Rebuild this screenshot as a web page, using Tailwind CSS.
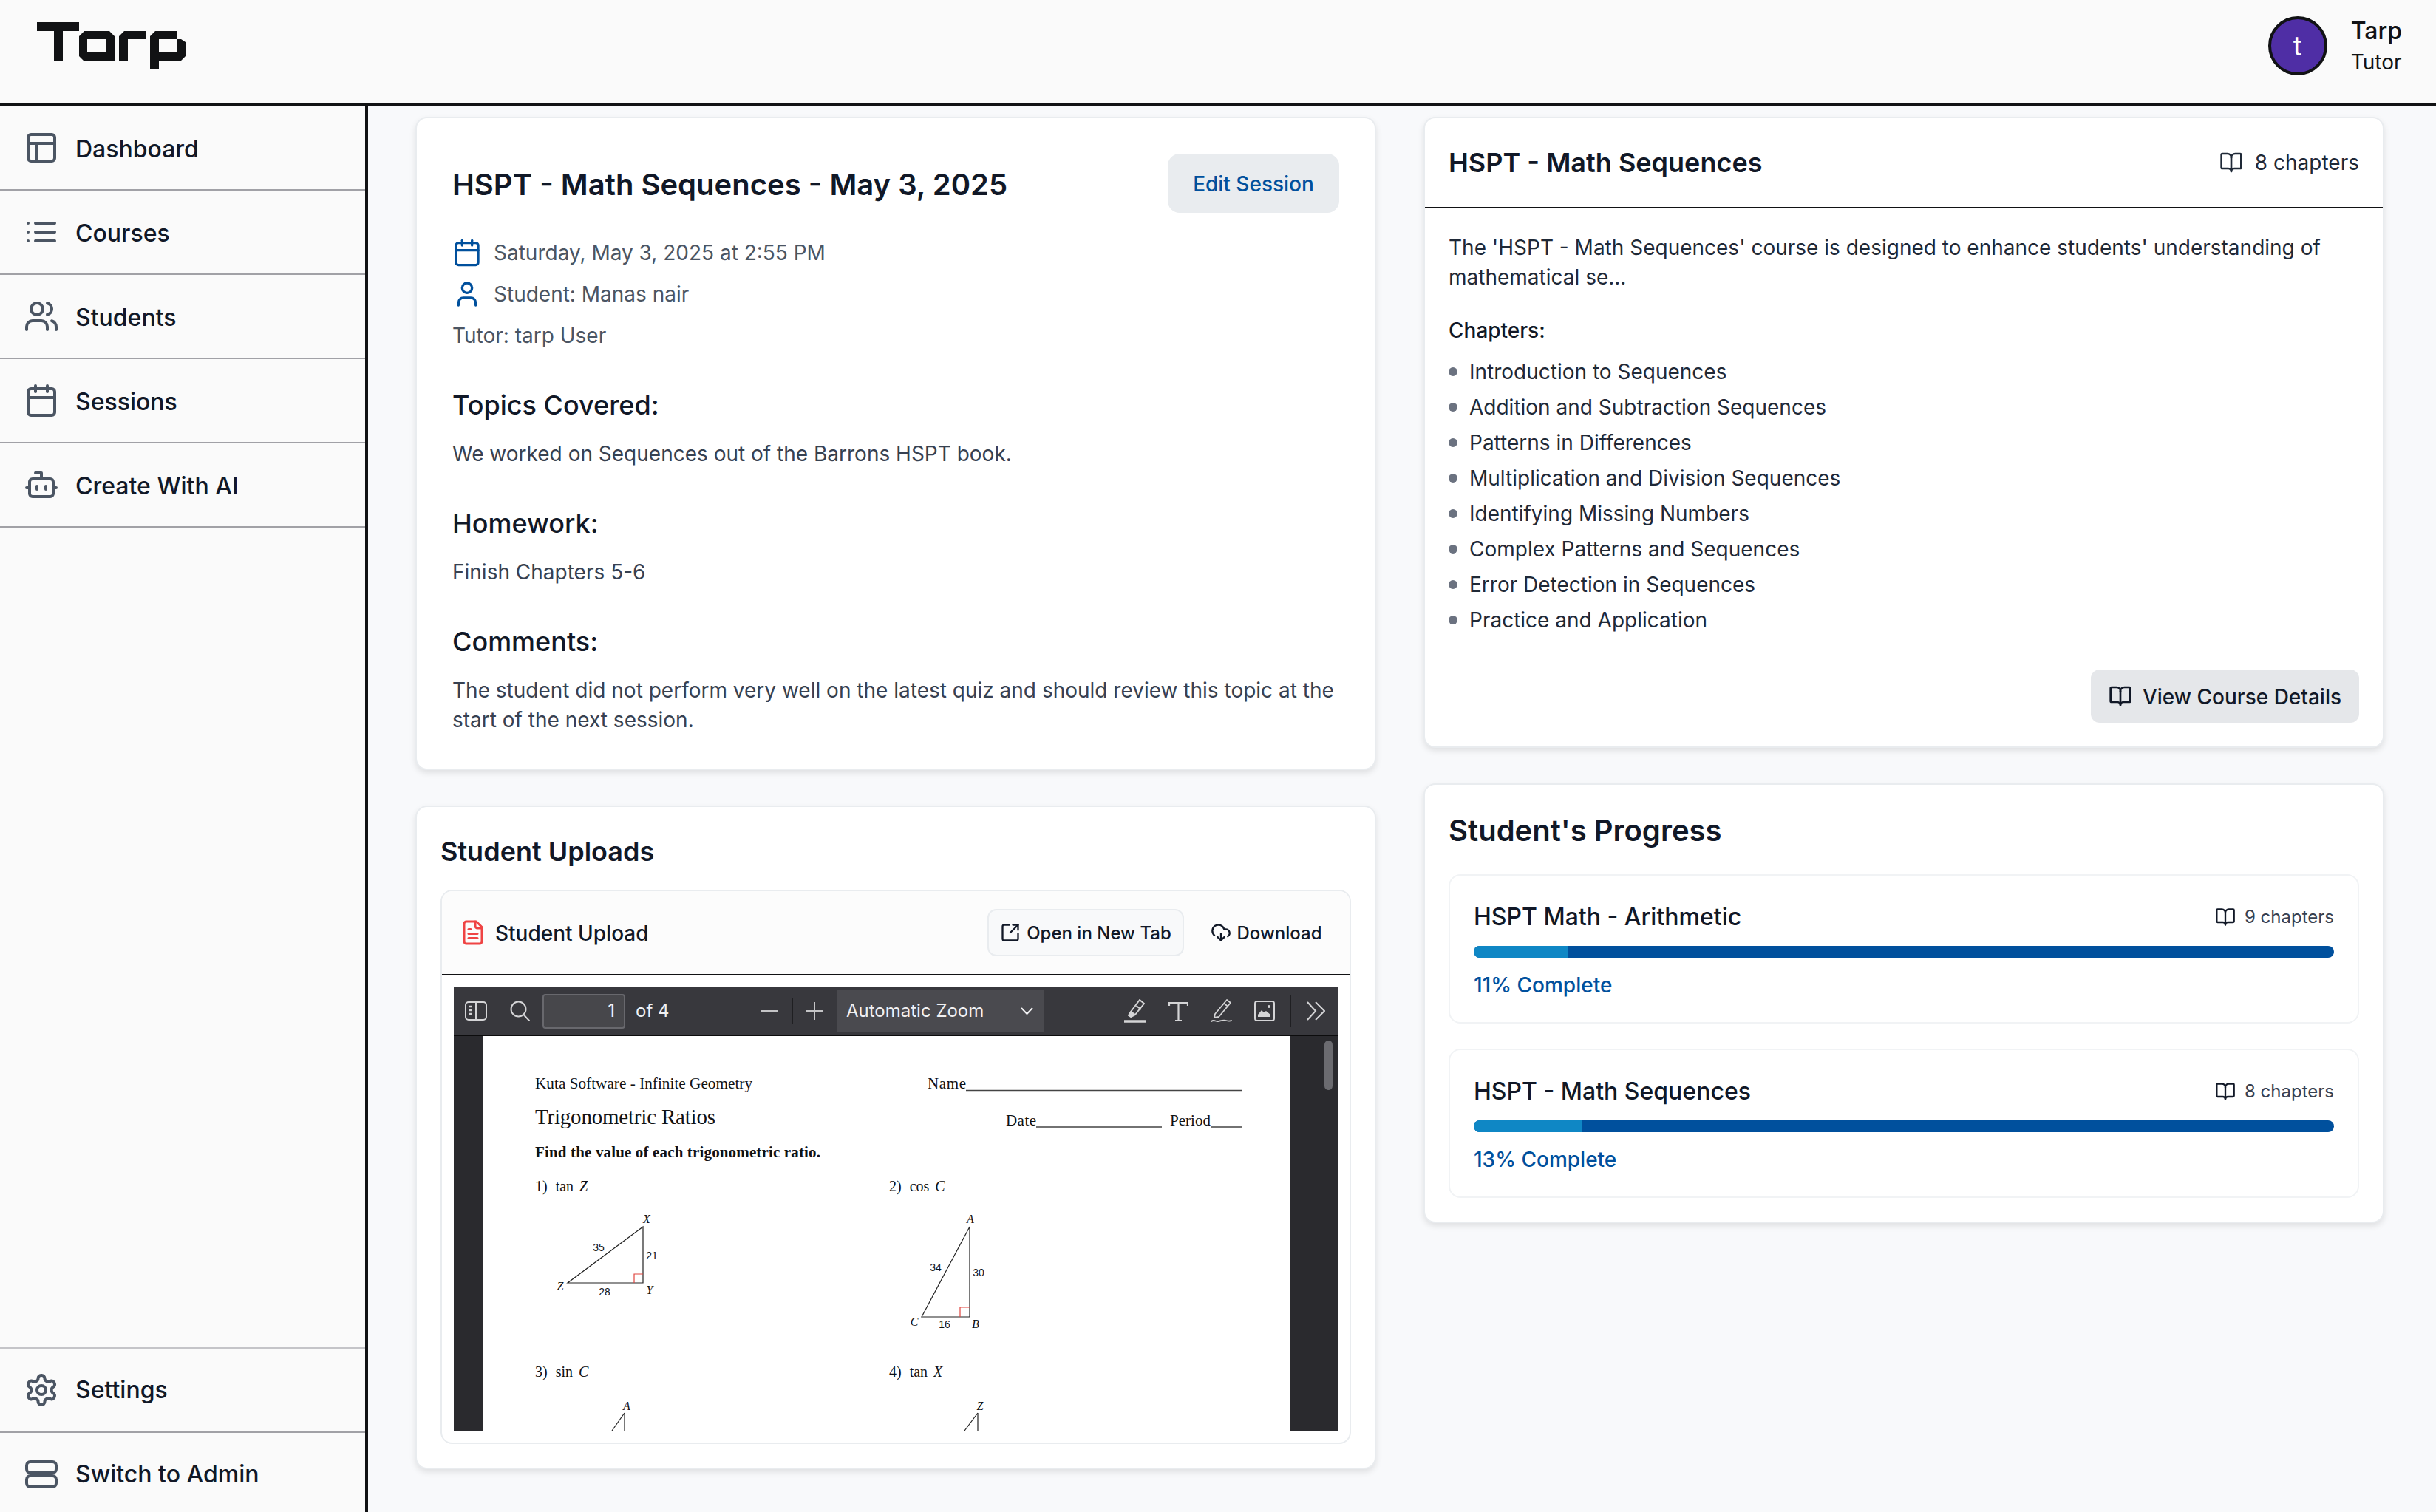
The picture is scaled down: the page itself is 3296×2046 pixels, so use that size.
<!DOCTYPE html>
<html lang="en">
<head>
    <meta charset="UTF-8">
    <meta name="viewport" content="width=device-width, initial-scale=1.0">
    <title>Tarp - Session</title>
    <script src="https://cdn.jsdelivr.net/npm/@tailwindcss/browser@4"></script>
</head>
<body class="h-[2046px] overflow-hidden bg-[#f8f9fb] text-[#111827] [font-family:Inter,sans-serif]">
    <!-- Top bar -->
    <header class="flex h-[144px] items-center justify-between border-b-4 border-[#111214] bg-[#fafafa] pl-[50px] pr-[46px]">
        <svg class="mb-[16px] h-[64px] w-[201px]" viewBox="50 30 201 64" fill="#111214" fill-rule="evenodd" role="img" aria-label="Tarp">
            <path d="M50 30H107V42H85V83H73V42H50Z"/>
            <path d="M114 42H148L155 49V83H114L107 76V49ZM118 53V71H143V53Z"/>
            <path d="M168 42H197V53H173V83H161V49Z"/>
            <path d="M210 42H239V53H245L251 57V76L244 83H215V94H203V49ZM215 53V71H239V53Z"/>
        </svg>
        <div class="mb-[16px] flex items-center gap-[32px]">
            <div class="flex h-[80px] w-[80px] items-center justify-center rounded-full border-4 border-[#111214] bg-[#4f2ea5] text-[36px] text-white">t</div>
            <div>
                <div class="text-[32px] font-medium leading-[44px] text-[#111214]">Tarp</div>
                <div class="text-[28px] leading-[40px] text-[#111214]">Tutor</div>
            </div>
        </div>
    </header>

    <div class="flex h-[1902px]">
        <!-- Sidebar -->
        <aside class="flex w-[498px] shrink-0 flex-col justify-between overflow-hidden border-r-4 border-[#111214] bg-[#fafafa] text-[32px] font-medium">
            <ul>
                <li class="flex h-[114px] items-center gap-[22px] border-b-2 border-[#a1a1a6] pl-8">
                    <svg class="h-12 w-12 text-[#4b5563]" viewBox="0 0 24 24" fill="none" stroke="currentColor" stroke-width="2" stroke-linecap="round" stroke-linejoin="round"><rect width="18" height="18" x="3" y="3" rx="2"/><path d="M3 9h18"/><path d="M9 21V9"/></svg>
                    <span class="pt-1">Dashboard</span>
                </li>
                <li class="flex h-[114px] items-center gap-[22px] border-b-2 border-[#a1a1a6] pl-8">
                    <svg class="h-12 w-12 text-[#4b5563]" viewBox="0 0 24 24" fill="none" stroke="currentColor" stroke-width="2" stroke-linecap="round" stroke-linejoin="round"><path d="M3 12h.01"/><path d="M3 18h.01"/><path d="M3 6h.01"/><path d="M8 12h13"/><path d="M8 18h13"/><path d="M8 6h13"/></svg>
                    <span class="pt-1">Courses</span>
                </li>
                <li class="flex h-[114px] items-center gap-[22px] border-b-2 border-[#a1a1a6] pl-8">
                    <svg class="h-12 w-12 text-[#4b5563]" viewBox="0 0 24 24" fill="none" stroke="currentColor" stroke-width="2" stroke-linecap="round" stroke-linejoin="round"><path d="M16 21v-2a4 4 0 0 0-4-4H6a4 4 0 0 0-4 4v2"/><circle cx="9" cy="7" r="4"/><path d="M22 21v-2a4 4 0 0 0-3-3.87"/><path d="M16 3.13a4 4 0 0 1 0 7.75"/></svg>
                    <span class="pt-1">Students</span>
                </li>
                <li class="flex h-[114px] items-center gap-[22px] border-b-2 border-[#a1a1a6] pl-8">
                    <svg class="h-12 w-12 text-[#4b5563]" viewBox="0 0 24 24" fill="none" stroke="currentColor" stroke-width="2" stroke-linecap="round" stroke-linejoin="round"><path d="M8 2v4"/><path d="M16 2v4"/><rect width="18" height="18" x="3" y="4" rx="2"/><path d="M3 10h18"/></svg>
                    <span class="pt-1">Sessions</span>
                </li>
                <li class="flex h-[114px] items-center gap-[22px] border-b-2 border-[#a1a1a6] pl-8">
                    <svg class="h-12 w-12 text-[#4b5563]" viewBox="0 0 24 24" fill="none" stroke="currentColor" stroke-width="2" stroke-linecap="round" stroke-linejoin="round"><path d="M12 8V4H8"/><rect width="16" height="12" x="4" y="8" rx="2"/><path d="M2 14h2"/><path d="M20 14h2"/><path d="M15 13v2"/><path d="M9 13v2"/></svg>
                    <span class="pt-1">Create With AI</span>
                </li>
            </ul>
            <ul class="mb-[-5px] shrink-0">
                <li class="flex h-[114px] items-center gap-[22px] border-t-2 border-[#c4c4c8] pl-8">
                    <svg class="h-12 w-12 text-[#4b5563]" viewBox="0 0 24 24" fill="none" stroke="currentColor" stroke-width="2" stroke-linecap="round" stroke-linejoin="round"><path d="M12.22 2h-.44a2 2 0 0 0-2 2v.18a2 2 0 0 1-1 1.73l-.43.25a2 2 0 0 1-2 0l-.15-.08a2 2 0 0 0-2.73.73l-.22.38a2 2 0 0 0 .73 2.73l.15.1a2 2 0 0 1 1 1.72v.51a2 2 0 0 1-1 1.74l-.15.09a2 2 0 0 0-.73 2.73l.22.38a2 2 0 0 0 2.73.73l.15-.08a2 2 0 0 1 2 0l.43.25a2 2 0 0 1 1 1.73V20a2 2 0 0 0 2 2h.44a2 2 0 0 0 2-2v-.18a2 2 0 0 1 1-1.73l.43-.25a2 2 0 0 1 2 0l.15.08a2 2 0 0 0 2.73-.73l.22-.39a2 2 0 0 0-.73-2.73l-.15-.08a2 2 0 0 1-1-1.74v-.5a2 2 0 0 1 1-1.74l.15-.09a2 2 0 0 0 .73-2.73l-.22-.38a2 2 0 0 0-2.73-.73l-.15.08a2 2 0 0 1-2 0l-.43-.25a2 2 0 0 1-1-1.73V4a2 2 0 0 0-2-2z"/><circle cx="12" cy="12" r="3"/></svg>
                    <span>Settings</span>
                </li>
                <li class="flex h-[114px] items-center gap-[22px] border-t-2 border-[#a1a1a6] pl-8">
                    <svg class="h-12 w-12 text-[#4b5563]" viewBox="0 0 24 24" fill="none" stroke="currentColor" stroke-width="2" stroke-linecap="round" stroke-linejoin="round"><rect width="20" height="7.5" x="2" y="3.5" rx="2.5"/><rect width="20" height="7.5" x="2" y="13" rx="2.5"/></svg>
                    <span>Switch to Admin</span>
                </li>
            </ul>
        </aside>

        <!-- Main -->
        <main class="grid min-w-0 flex-1 grid-cols-2 items-start gap-16 pl-16 pr-[70px] pt-[14px]">
            <!-- Left column -->
            <div class="flex min-w-0 flex-col gap-12">
                <section class="rounded-2xl border-2 border-[#e9ecef] bg-white px-12 pb-[46px] pt-12 shadow-[0_4px_8px_rgba(0,0,0,0.1)]">
                    <div class="mb-[34px] flex h-20 items-center justify-between">
                        <h1 class="pt-1 text-[40px] font-semibold">HSPT - Math Sequences - May 3, 2025</h1>
                        <button class="h-20 w-[232px] rounded-2xl bg-[#e9ecef] pt-[2px] text-[28px] font-medium text-[#00509d]">Edit Session</button>
                    </div>
                    <div class="flex flex-col gap-4 text-[28px] leading-[40px] text-[#4b5563]">
                        <div class="flex items-center gap-4">
                            <svg class="h-10 w-10 text-[#00509d]" viewBox="0 0 24 24" fill="none" stroke="currentColor" stroke-width="2" stroke-linecap="round" stroke-linejoin="round"><path d="M8 2v4"/><path d="M16 2v4"/><rect width="18" height="18" x="3" y="4" rx="2"/><path d="M3 10h18"/></svg>
                            <span>Saturday, May 3, 2025 at 2:55 PM</span>
                        </div>
                        <div class="flex items-center gap-4">
                            <svg class="h-10 w-10 text-[#00509d]" viewBox="0 0 24 24" fill="none" stroke="currentColor" stroke-width="2" stroke-linecap="round" stroke-linejoin="round"><path d="M19 21v-2a4 4 0 0 0-4-4H9a4 4 0 0 0-4 4v2"/><circle cx="12" cy="7" r="4"/></svg>
                            <span>Student: Manas nair</span>
                        </div>
                        <div>Tutor: tarp User</div>
                    </div>
                    <h2 class="mb-[18px] mt-[46px] text-[36px] font-medium leading-[56px]">Topics Covered:</h2>
                    <p class="text-[28px] leading-[40px] text-[#374151]">We worked on Sequences out of the Barrons HSPT book.</p>
                    <h2 class="mb-[18px] mt-[46px] text-[36px] font-medium leading-[56px]">Homework:</h2>
                    <p class="text-[28px] leading-[40px] text-[#374151]">Finish Chapters 5-6</p>
                    <h2 class="mb-[18px] mt-[46px] text-[36px] font-medium leading-[56px]">Comments:</h2>
                    <p class="text-[28px] leading-[40px] text-[#374151]">The student did not perform very well on the latest quiz and should review this topic at the start of the next session.</p>
                </section>

                <section class="rounded-2xl border-2 border-[#e9ecef] bg-white p-8 shadow-[0_4px_8px_rgba(0,0,0,0.1)]">
                    <h2 class="mb-6 text-[36px] font-semibold leading-[56px]">Student Uploads</h2>
                    <div class="overflow-hidden rounded-2xl border-2 border-[#e9ecef]">
                        <div class="flex h-[114px] items-center justify-between border-b-2 border-[#111214] bg-[#fcfcfc] pl-6 pr-[2px]">
                            <div class="flex items-center gap-[12px] text-[28px] font-medium">
                                <svg class="h-[36px] w-[36px] text-[#ef4444]" viewBox="0 0 24 24" fill="none" stroke="currentColor" stroke-width="2" stroke-linecap="round" stroke-linejoin="round"><path d="M15 2H6a2 2 0 0 0-2 2v16a2 2 0 0 0 2 2h12a2 2 0 0 0 2-2V7Z"/><path d="M14 2v4a2 2 0 0 0 2 2h4"/><path d="M10 9H8"/><path d="M16 13H8"/><path d="M16 17H8"/></svg>
                                <span class="pt-[2px]">Student Upload</span>
                            </div>
                            <div class="flex items-center text-[24px] font-medium">
                                <button class="flex h-[64px] w-[266px] items-center justify-center gap-[8px] rounded-xl border-2 border-[#e9ecef] bg-[#f8f9fa]">
                                    <svg class="h-[28px] w-[28px]" viewBox="0 0 24 24" fill="none" stroke="currentColor" stroke-width="2" stroke-linecap="round" stroke-linejoin="round"><path d="M21 13v6a2 2 0 0 1-2 2H5a2 2 0 0 1-2-2V5a2 2 0 0 1 2-2h6"/><path d="m21 3-9 9"/><path d="M15 3h6v6"/></svg>
                                    <span class="pt-[2px]">Open in New Tab</span>
                                </button>
                                <button class="flex h-[64px] w-[222px] items-center justify-center gap-[8px]">
                                    <svg class="h-[28px] w-[28px]" viewBox="0 0 24 24" fill="none" stroke="currentColor" stroke-width="2" stroke-linecap="round" stroke-linejoin="round"><path d="M12 13v8l-4-4"/><path d="m12 21 4-4"/><path d="M4.393 15.269A7 7 0 1 1 15.71 8h1.79a4.5 4.5 0 0 1 2.436 8.284"/></svg>
                                    <span class="pt-[2px]">Download</span>
                                </button>
                            </div>
                        </div>
                        <div class="p-4">
                            <!-- Embedded PDF viewer -->
                            <div class="h-[600px] overflow-hidden bg-[#2a2a2e]">
                                <div class="flex h-[66px] items-center border-b-2 border-[#0c0c0d] bg-[#38383d] text-[24px] text-[#f0f0f2]">
                                    <svg class="ml-[15px] h-[26px] w-[30px] text-[#d4d4d6]" viewBox="0 0 30 26" fill="none" stroke="currentColor" stroke-width="2"><rect x="1" y="1" width="28" height="24" rx="4"/><path d="M15 1v24"/><path d="M6 7h4M6 12h4M6 17h4" stroke-width="2.5"/></svg>
                                    <svg class="ml-[31px] h-[28px] w-[27px] text-[#d4d4d6]" viewBox="0 0 27 28" fill="none" stroke="currentColor" stroke-width="2" stroke-linecap="round"><circle cx="11.5" cy="11.5" r="10"/><path d="M18.5 19 26 27"/></svg>
                                    <div class="ml-[17px] flex h-[47px] w-[112px] items-center justify-end rounded-[4px] border-2 border-[#68686d] bg-[#47474b] pr-3">1</div>
                                    <span class="ml-[14px] w-[43px] whitespace-nowrap">of 4</span>
                                    <div class="ml-[126px] h-[2px] w-[24px] bg-[#c4c4c6]"></div>
                                    <div class="ml-[18px] h-[34px] w-[2px] bg-[#1f1f22]"></div>
                                    <svg class="ml-[17px] h-[24px] w-[24px] text-[#c4c4c6]" viewBox="0 0 24 24" fill="none" stroke="currentColor" stroke-width="2"><path d="M0 12h24M12 0v24"/></svg>
                                    <div class="ml-[19px] flex h-[56px] w-[280px] items-center justify-between bg-[#4a4a4f] pl-3 pr-[15px]">
                                        <span>Automatic Zoom</span>
                                        <svg class="h-[10px] w-[17px]" viewBox="0 0 17 10" fill="none" stroke="currentColor" stroke-width="2"><path d="m1 1 7.5 8L16 1"/></svg>
                                    </div>
                                    <svg class="ml-[108px] h-[32px] w-[30px] text-[#d4d4d6]" viewBox="0 0 30 32" fill="none" stroke="currentColor" stroke-width="2" stroke-linejoin="round"><path d="M21 1 27 6 15 21 9 17Z"/><path d="M16.5 9 23 14" /><path d="M9 17 6 22l3 2 6-3" fill="currentColor"/><path d="M0 30h30" stroke-width="3.5"/></svg>
                                    <svg class="ml-[30px] h-[27px] w-[27px] text-[#d4d4d6]" viewBox="0 0 27 27" fill="none" stroke="currentColor" stroke-width="2"><path d="M1 6V2h25v4M13.5 2v24M9 26h9" stroke-width="2.2"/></svg>
                                    <svg class="ml-[30px] h-[32px] w-[29px] text-[#d4d4d6]" viewBox="0 0 29 32" fill="none" stroke="currentColor" stroke-width="1.8" stroke-linejoin="round"><path d="M22 1 27 5 11 24 5 25 6 20Z"/><path d="M18.5 6 23.5 10"/><path d="M1 30c4-3 6 1 10 0s6-2 10-1 5 1 7 0" stroke-linecap="round"/></svg>
                                    <svg class="ml-[30px] h-[28px] w-[28px] text-[#d4d4d6]" viewBox="0 0 28 28" fill="none" stroke="currentColor" stroke-width="2"><rect x="1" y="1" width="26" height="26" rx="3"/><path d="M5 22v-3l5-6 3 3 3-2 6 5v3Z" fill="currentColor" stroke="none"/><circle cx="20" cy="8" r="2" fill="currentColor" stroke="none"/></svg>
                                    <div class="ml-[20px] h-[44px] w-[2px] bg-[#1f1f22]"></div>
                                    <svg class="ml-[21px] h-[26px] w-[25px] text-[#d4d4d6]" viewBox="0 0 25 26" fill="none" stroke="currentColor" stroke-width="2"><path d="m1 1 11 12L1 25M12 1l12 12-12 12"/></svg>
                                </div>
                                <div class="relative flex h-[534px] pl-[40px]">
                                    <svg class="h-[534px] w-[1092px] shrink-0 bg-white [font-family:'Liberation_Serif',serif]" viewBox="654 1402 1092 534" fill="#111214" font-size="21">
                                        <text x="724" y="1473" textLength="294" font-size="21.2">Kuta Software - Infinite Geometry</text>
                                        <text x="1255" y="1473" textLength="52">Name</text>
                                        <path d="M1307 1475.5H1681M1402 1525H1572M1638 1525H1681" stroke="#444" stroke-width="1.6"/>
                                        <text x="724" y="1521" font-size="29" textLength="244">Trigonometric Ratios</text>
                                        <text x="1361" y="1523" textLength="41">Date</text>
                                        <text x="1583" y="1523" textLength="55">Period</text>
                                        <text x="724" y="1566" font-weight="700" textLength="386">Find the value of each trigonometric ratio.</text>
                                        <text x="724" y="1612" font-size="20">1)<tspan dx="11">tan</tspan><tspan dx="8" font-style="italic">Z</tspan></text>
                                        <text x="1203" y="1612" font-size="20">2)<tspan dx="11">cos</tspan><tspan dx="8" font-style="italic">C</tspan></text>
                                        <text x="724" y="1863" font-size="20">3)<tspan dx="11">sin</tspan><tspan dx="8" font-style="italic">C</tspan></text>
                                        <text x="1203" y="1863" font-size="20">4)<tspan dx="11">tan</tspan><tspan dx="8" font-style="italic">X</tspan></text>

                                        <path d="M870 1660V1736H768ZM1312 1660V1782H1247ZM845 1912V1936M845 1912 828 1936M1323 1912V1936M1323 1912 1305 1936" fill="none" stroke="#222" stroke-width="1.2"/>
                                        <path d="M858 1736V1724H870M1299 1782V1769H1312" fill="none" stroke="#e0443e" stroke-width="1.2"/>
                                        <g font-size="16" font-style="italic" text-anchor="middle">
                                            <text x="875" y="1655">X</text><text x="758" y="1746">Z</text><text x="879" y="1751">Y</text>
                                            <text x="1313" y="1655">A</text><text x="1237" y="1794">C</text><text x="1320" y="1797">B</text>
                                            <text x="848" y="1908">A</text><text x="1326" y="1908">Z</text>
                                        </g>
                                        <g font-size="14" text-anchor="middle" class="[font-family:'Liberation_Sans',sans-serif]">
                                            <text x="810" y="1693">35</text><text x="882" y="1704">21</text><text x="818" y="1753">28</text>
                                            <text x="1266" y="1720">34</text><text x="1324" y="1727">30</text><text x="1278" y="1797">16</text>
                                        </g>
                                    </svg>
                                    <div class="absolute left-[1178px] top-[6px] h-[67px] w-[11px] rounded-full bg-[#6b6b70]"></div>
                                </div>
                            </div>
                        </div>
                    </div>
                </section>
            </div>

            <!-- Right column -->
            <div class="flex min-w-0 flex-col gap-12">
                <section class="rounded-2xl border-2 border-[#e9ecef] bg-white shadow-[0_4px_8px_rgba(0,0,0,0.1)]">
                    <div class="flex h-[122px] items-center justify-between border-b-2 border-[#111214] px-8">
                        <h2 class="text-[36px] font-semibold">HSPT - Math Sequences</h2>
                        <div class="flex items-center gap-[16px] text-[28px] text-[#1f2937]">
                            <svg class="h-[32px] w-[32px]" viewBox="0 0 24 24" fill="none" stroke="currentColor" stroke-width="2" stroke-linecap="round" stroke-linejoin="round"><path d="M12 7v14"/><path d="M3 18a1 1 0 0 1-1-1V4a1 1 0 0 1 1-1h5a4 4 0 0 1 4 4 4 4 0 0 1 4-4h5a1 1 0 0 1 1 1v13a1 1 0 0 1-1 1h-6a3 3 0 0 0-3 3 3 3 0 0 0-3-3z"/></svg>
                            <span>8 chapters</span>
                        </div>
                    </div>
                    <div class="px-8 pb-8 pt-[33px] text-[28px] leading-[40px]">
                        <p class="text-[#1f2937]">The 'HSPT - Math Sequences' course is designed to enhance students' understanding of mathematical se...</p>
                        <h3 class="mb-4 mt-8 font-medium">Chapters:</h3>
                        <ul class="flex flex-col gap-2 text-[#1f2937]">
                            <li class="flex items-center gap-[16px]"><span class="h-[12px] w-[12px] rounded-full bg-[#6b7280]"></span>Introduction to Sequences</li>
                            <li class="flex items-center gap-[16px]"><span class="h-[12px] w-[12px] rounded-full bg-[#6b7280]"></span>Addition and Subtraction Sequences</li>
                            <li class="flex items-center gap-[16px]"><span class="h-[12px] w-[12px] rounded-full bg-[#6b7280]"></span>Patterns in Differences</li>
                            <li class="flex items-center gap-[16px]"><span class="h-[12px] w-[12px] rounded-full bg-[#6b7280]"></span>Multiplication and Division Sequences</li>
                            <li class="flex items-center gap-[16px]"><span class="h-[12px] w-[12px] rounded-full bg-[#6b7280]"></span>Identifying Missing Numbers</li>
                            <li class="flex items-center gap-[16px]"><span class="h-[12px] w-[12px] rounded-full bg-[#6b7280]"></span>Complex Patterns and Sequences</li>
                            <li class="flex items-center gap-[16px]"><span class="h-[12px] w-[12px] rounded-full bg-[#6b7280]"></span>Error Detection in Sequences</li>
                            <li class="flex items-center gap-[16px]"><span class="h-[12px] w-[12px] rounded-full bg-[#6b7280]"></span>Practice and Application</li>
                        </ul>
                        <div class="mt-[47px] flex justify-end">
                            <button class="flex h-[72px] w-[363px] items-center justify-center gap-[14px] rounded-xl bg-[#e5e7ea] font-medium">
                                <svg class="h-[32px] w-[32px]" viewBox="0 0 24 24" fill="none" stroke="currentColor" stroke-width="2" stroke-linecap="round" stroke-linejoin="round"><path d="M12 7v14"/><path d="M3 18a1 1 0 0 1-1-1V4a1 1 0 0 1 1-1h5a4 4 0 0 1 4 4 4 4 0 0 1 4-4h5a1 1 0 0 1 1 1v13a1 1 0 0 1-1 1h-6a3 3 0 0 0-3 3 3 3 0 0 0-3-3z"/></svg>
                                <span class="pt-[2px]">View Course Details</span>
                            </button>
                        </div>
                    </div>
                </section>

                <section class="rounded-2xl border-2 border-[#e9ecef] bg-white p-8 shadow-[0_4px_8px_rgba(0,0,0,0.1)]">
                    <h2 class="mb-[29px] text-[40px] font-semibold leading-[60px]">Student's Progress</h2>
                    <div class="flex flex-col gap-[34px]">
                        <div class="rounded-2xl border-2 border-[#f1f3f5] px-8 pb-[30px] pt-8">
                            <div class="flex h-12 items-center justify-between">
                                <span class="text-[32px] font-medium">HSPT Math - Arithmetic</span>
                                <span class="flex items-center gap-[12px] text-[24px] text-[#374151]">
                                    <svg class="h-[28px] w-[28px] text-[#111827]" viewBox="0 0 24 24" fill="none" stroke="currentColor" stroke-width="2" stroke-linecap="round" stroke-linejoin="round"><path d="M12 7v14"/><path d="M3 18a1 1 0 0 1-1-1V4a1 1 0 0 1 1-1h5a4 4 0 0 1 4 4 4 4 0 0 1 4-4h5a1 1 0 0 1 1 1v13a1 1 0 0 1-1 1h-6a3 3 0 0 0-3 3 3 3 0 0 0-3-3z"/></svg>
                                    9 chapters
                                </span>
                            </div>
                            <div class="mt-[15px] h-4 overflow-hidden rounded-full bg-[#00509d]">
                                <div class="h-full bg-[#0f87c5]" style="width: 11%"></div>
                            </div>
                            <div class="mt-[17px] text-[28px] font-medium leading-[40px] text-[#00509d]">11% Complete</div>
                        </div>
                        <div class="rounded-2xl border-2 border-[#f1f3f5] px-8 pb-[30px] pt-8">
                            <div class="flex h-12 items-center justify-between">
                                <span class="text-[32px] font-medium">HSPT - Math Sequences</span>
                                <span class="flex items-center gap-[12px] text-[24px] text-[#374151]">
                                    <svg class="h-[28px] w-[28px] text-[#111827]" viewBox="0 0 24 24" fill="none" stroke="currentColor" stroke-width="2" stroke-linecap="round" stroke-linejoin="round"><path d="M12 7v14"/><path d="M3 18a1 1 0 0 1-1-1V4a1 1 0 0 1 1-1h5a4 4 0 0 1 4 4 4 4 0 0 1 4-4h5a1 1 0 0 1 1 1v13a1 1 0 0 1-1 1h-6a3 3 0 0 0-3 3 3 3 0 0 0-3-3z"/></svg>
                                    8 chapters
                                </span>
                            </div>
                            <div class="mt-[15px] h-4 overflow-hidden rounded-full bg-[#00509d]">
                                <div class="h-full bg-[#0f87c5]" style="width: 12.5%"></div>
                            </div>
                            <div class="mt-[17px] text-[28px] font-medium leading-[40px] text-[#00509d]">13% Complete</div>
                        </div>
                    </div>
                </section>
            </div>
        </main>
    </div>
</body>
</html>
